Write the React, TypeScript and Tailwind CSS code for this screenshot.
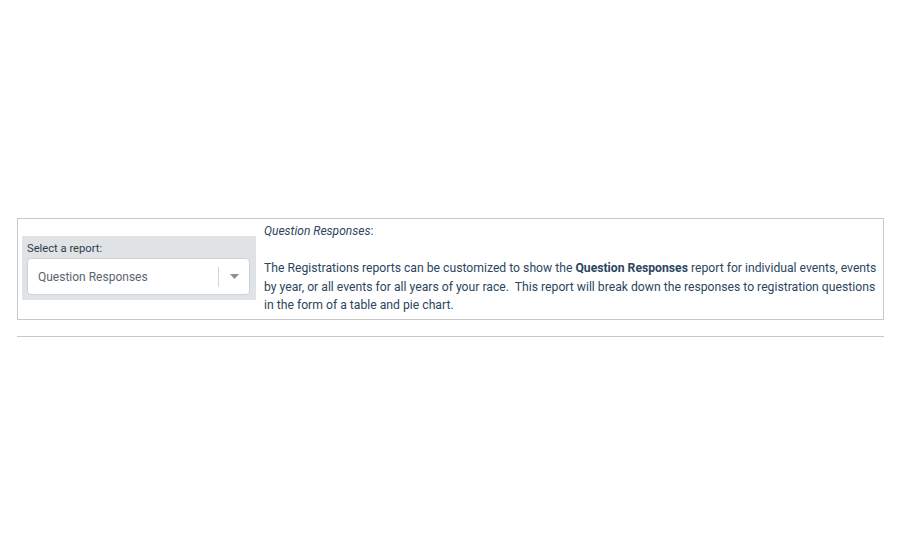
import React from "react";

export default function App() {
  return (
    <div className="w-[900px] h-[550px] bg-white" style={{ fontFamily: "Roboto, 'Liberation Sans', sans-serif" }}>
      <div className="h-[218px]" />
      <div className="ml-[17px] mr-[16px] border border-[#c8c8c8] flex items-start pl-[4px] pr-[6px] pt-[3px] pb-[4px]">
        <div className="mt-[14px] w-[234px] shrink-0 bg-[#dfe3e6] pt-[4px] pl-[5px] pr-[6px] pb-[5px]">
          <div className="text-[11.2px] leading-[18px] text-[#2f3b48]">Select a report:</div>
          <div className="h-[37px] bg-white border border-[#cfd3d6] rounded-[4px] flex items-center">
            <span className="flex-1 pl-[10px] text-[12px] text-[#5b6470]">Question Responses</span>
            <span className="w-px h-[20px] bg-[#d6d6d6]" />
            <span className="w-[30px] flex justify-center">
              <svg width="9" height="5" viewBox="0 0 9 5">
                <path d="M0 0 L9 0 L4.5 5 Z" fill="#8a8f95" />
              </svg>
            </span>
          </div>
        </div>
        <div className="ml-[8px] flex-1 text-[12.2px] leading-[18.5px] text-[#2d4660]">
          <div className="text-[12px]"><i>Question Responses</i>:</div>
          <div className="h-[18.5px]" />
          <div>
            The Registrations reports can be customized to show the <b>Question Responses</b> report for individual events, events by year, or all events for all years of your race.&nbsp; This report will break down the responses to registration questions in the form of a table and pie chart.
          </div>
        </div>
      </div>
      <div className="ml-[17px] mr-[16px] mt-[16px] h-px bg-[#c8c8c8]" />
    </div>
  );
}
